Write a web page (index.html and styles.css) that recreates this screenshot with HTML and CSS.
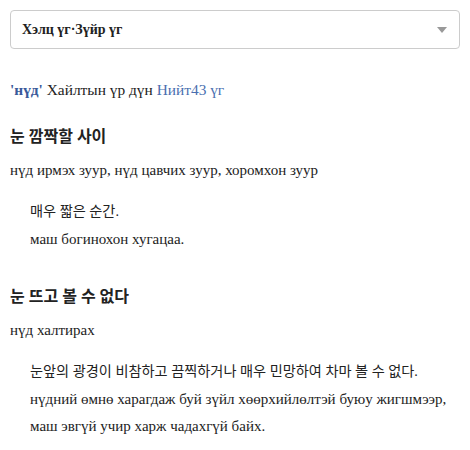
FILE: index.html
```html
<!DOCTYPE html>
<html>
<head>
<meta charset="utf-8">
<link rel="stylesheet" href="styles.css">
</head>
<body>
<div class="page">
  <div class="select">
    <span class="select-label">Хэлц үг·Зүйр үг</span>
    <span class="caret"></span>
  </div>
  <div class="result">
    <b class="kw">'нүд'</b> Хайлтын үр дүн <span class="count">Нийт43 үг</span>
  </div>
  <div class="entry">
    <h3 class="title">눈 깜짝할 사이</h3>
    <p class="meaning">нүд ирмэх зуур, нүд цавчих зуур, хоромхон зуур</p>
    <div class="examples">
      <p class="ex ex-ko">매우 짧은 순간.</p>
      <p class="ex">маш богинохон хугацаа.</p>
    </div>
  </div>
  <div class="entry">
    <h3 class="title">눈 뜨고 볼 수 없다</h3>
    <p class="meaning">нүд халтирах</p>
    <div class="examples">
      <p class="ex ex-ko">눈앞의 광경이 비참하고 끔찍하거나 매우 민망하여 차마 볼 수 없다.</p>
      <p class="ex">нүдний өмнө харагдаж буй зүйл хөөрхийлөлтэй буюу жигшмээр, маш эвгүй учир харж чадахгүй байх.</p>
    </div>
  </div>
</div>
</body>
</html>
```
FILE: styles.css
```css
html, body { margin: 0; padding: 0; background: #fff; }
body {
  font-family: "Liberation Serif", "Noto Sans CJK KR", serif;
  color: #222;
  font-size: 15px;
}
.page { padding: 10px; }
.select {
  height: 37px;
  border: 1px solid #ccc;
  border-radius: 4px;
  display: flex;
  align-items: center;
  justify-content: space-between;
  padding: 0 12px 0 11px;
}
.select-label { font-weight: bold; font-size: 14px; color: #222; }
.caret {
  width: 0; height: 0;
  border-left: 5px solid transparent;
  border-right: 5px solid transparent;
  border-top: 6px solid #999;
}
.result { margin-top: 31px; font-size: 15.4px; line-height: 20px; }
.kw { color: #3a5a9a; }
.count { color: #4a6fb0; }
.entry { margin-top: 26px; }
.entry + .entry { margin-top: 33px; }
.title { margin: 0; font-size: 16px; font-weight: bold; line-height: 22px; }
.meaning { margin: 12px 0 0; line-height: 20px; }
.examples { margin-top: 18px; padding-left: 20px; }
.ex { margin: 0; line-height: 27.5px; }
.ex-ko { font-size: 14.2px; }
```
